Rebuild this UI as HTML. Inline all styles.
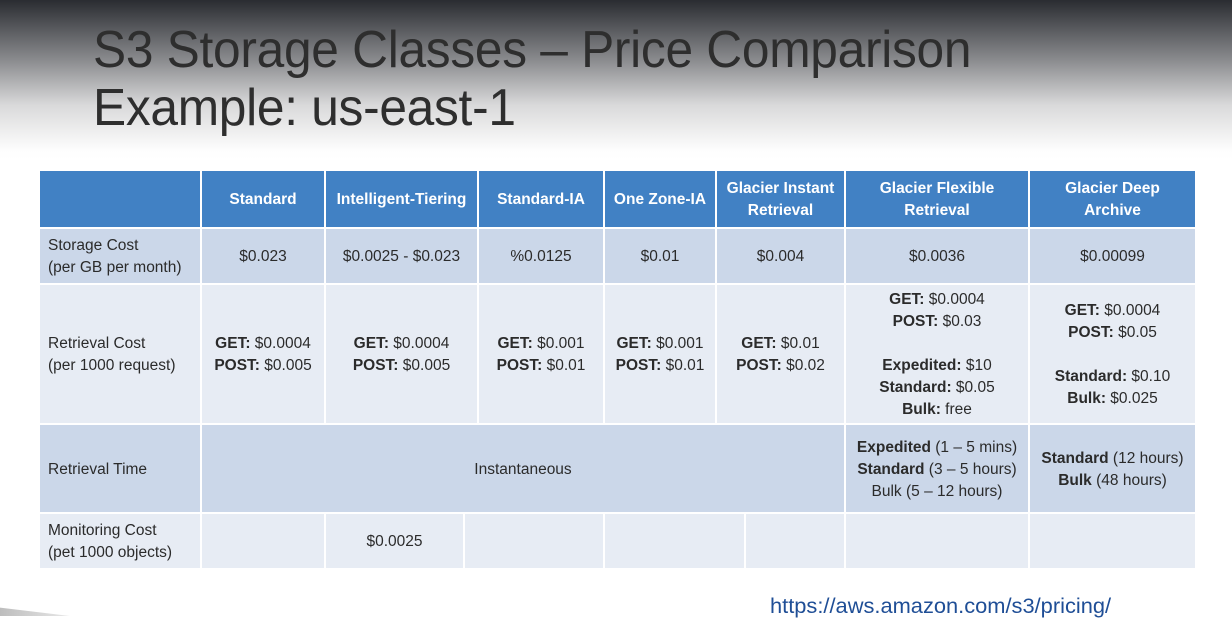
<!DOCTYPE html>
<html style="background:#fff"><head><meta charset="utf-8"><style>
*{margin:0;padding:0;box-sizing:border-box}
html,body{background:#fff}
body{width:1232px;height:616px;overflow:hidden;position:relative;font-family:"Liberation Sans",sans-serif}
.bg{position:absolute;left:0;top:0;width:1232px;height:170px;background:linear-gradient(#2a2c31 0px,#8a8b8e 60px,#d9d9da 105px,#fdfdfd 150px,#fff 160px)}
.t{position:absolute;left:93px;color:#2e2e2e;font-weight:300;font-size:52px;transform-origin:0 0;white-space:nowrap;letter-spacing:-0.3px}
.c{position:absolute;display:flex;align-items:center;justify-content:center;text-align:center;font-size:15.5px;line-height:22px;color:#2b2b2b;padding-top:2px}
.h{background:#4181c4;color:#fff;font-weight:bold}
.a{background:#cbd7e9}
.b{background:#e7ecf4}
.l{justify-content:flex-start;text-align:left;padding-left:8px}
b{font-weight:bold}
</style></head><body>
<div class="bg"></div>
<div class="t" style="top:20px;transform:scaleX(0.955)">S3 Storage Classes – Price Comparison</div>
<div class="t" style="top:78px;transform:scaleX(0.955)">Example: us-east-1</div>

<div class="c h" style="left:40px;top:171px;width:160px;height:56px"></div>
<div class="c h" style="left:202px;top:171px;width:122px;height:56px">Standard</div>
<div class="c h" style="left:326px;top:171px;width:151px;height:56px">Intelligent-Tiering</div>
<div class="c h" style="left:479px;top:171px;width:124px;height:56px">Standard-IA</div>
<div class="c h" style="left:605px;top:171px;width:110px;height:56px">One Zone-IA</div>
<div class="c h" style="left:717px;top:171px;width:127px;height:56px">Glacier Instant<br>Retrieval</div>
<div class="c h" style="left:846px;top:171px;width:182px;height:56px">Glacier Flexible<br>Retrieval</div>
<div class="c h" style="left:1030px;top:171px;width:165px;height:56px">Glacier Deep<br>Archive</div>

<div class="c a l" style="left:40px;top:229px;width:160px;height:54px">Storage Cost<br>(per GB per month)</div>
<div class="c a" style="left:202px;top:229px;width:122px;height:54px">$0.023</div>
<div class="c a" style="left:326px;top:229px;width:151px;height:54px">$0.0025 - $0.023</div>
<div class="c a" style="left:479px;top:229px;width:124px;height:54px">%0.0125</div>
<div class="c a" style="left:605px;top:229px;width:110px;height:54px">$0.01</div>
<div class="c a" style="left:717px;top:229px;width:127px;height:54px">$0.004</div>
<div class="c a" style="left:846px;top:229px;width:182px;height:54px">$0.0036</div>
<div class="c a" style="left:1030px;top:229px;width:165px;height:54px">$0.00099</div>

<div class="c b l" style="left:40px;top:285px;width:160px;height:138px">Retrieval Cost<br>(per 1000 request)</div>
<div class="c b" style="left:202px;top:285px;width:122px;height:138px"><div><b>GET:</b> $0.0004<br><b>POST:</b> $0.005</div></div>
<div class="c b" style="left:326px;top:285px;width:151px;height:138px"><div><b>GET:</b> $0.0004<br><b>POST:</b> $0.005</div></div>
<div class="c b" style="left:479px;top:285px;width:124px;height:138px"><div><b>GET:</b> $0.001<br><b>POST:</b> $0.01</div></div>
<div class="c b" style="left:605px;top:285px;width:110px;height:138px"><div><b>GET:</b> $0.001<br><b>POST:</b> $0.01</div></div>
<div class="c b" style="left:717px;top:285px;width:127px;height:138px"><div><b>GET:</b> $0.01<br><b>POST:</b> $0.02</div></div>
<div class="c b" style="left:846px;top:285px;width:182px;height:138px"><div><b>GET:</b> $0.0004<br><b>POST:</b> $0.03<br><br><b>Expedited:</b> $10<br><b>Standard:</b> $0.05<br><b>Bulk:</b> free</div></div>
<div class="c b" style="left:1030px;top:285px;width:165px;height:138px"><div><b>GET:</b> $0.0004<br><b>POST:</b> $0.05<br><br><b>Standard:</b> $0.10<br><b>Bulk:</b> $0.025</div></div>

<div class="c a l" style="left:40px;top:425px;width:160px;height:87px">Retrieval Time</div>
<div class="c a" style="left:202px;top:425px;width:642px;height:87px">Instantaneous</div>
<div class="c a" style="left:846px;top:425px;width:182px;height:87px"><div><b>Expedited</b> (1 – 5 mins)<br><b>Standard</b> (3 – 5 hours)<br>Bulk (5 – 12 hours)</div></div>
<div class="c a" style="left:1030px;top:425px;width:165px;height:87px"><div><b>Standard</b> (12 hours)<br><b>Bulk</b> (48 hours)</div></div>

<div class="c b l" style="left:40px;top:514px;width:160px;height:54px">Monitoring Cost<br>(pet 1000 objects)</div>
<div class="c b" style="left:202px;top:514px;width:122px;height:54px"></div>
<div class="c b" style="left:326px;top:514px;width:137px;height:54px">$0.0025</div>
<div class="c b" style="left:465px;top:514px;width:138px;height:54px"></div>
<div class="c b" style="left:605px;top:514px;width:139px;height:54px"></div>
<div class="c b" style="left:746px;top:514px;width:98px;height:54px"></div>
<div class="c b" style="left:846px;top:514px;width:182px;height:54px"></div>
<div class="c b" style="left:1030px;top:514px;width:165px;height:54px"></div>

<div style="position:absolute;left:0;top:604px;width:70px;height:12px;background:linear-gradient(90deg,#bdbdbd,#e8e8e8);clip-path:polygon(0 30%,100% 100%,0 100%)"></div>
<div style="position:absolute;left:770px;top:595px;font-size:21px;line-height:24px;color:#1f4e96;white-space:nowrap;transform:scaleX(1.04);transform-origin:0 0">https://aws.amazon.com/s3/pricing/</div>
</body></html>
